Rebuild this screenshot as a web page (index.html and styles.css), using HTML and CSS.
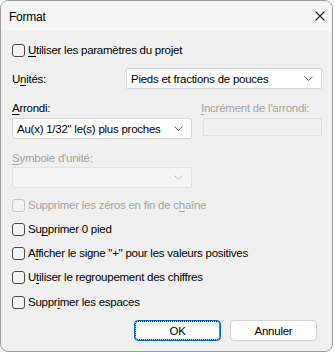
FILE: index.html
```html
<!DOCTYPE html>
<html lang="fr">
<head>
    <meta charset="UTF-8">
    <title>Format</title>
    <link rel="stylesheet" href="styles.css">
</head>
<body>

    <div class="window">
        <div class="titlebar">
            <span class="title">Format</span>
            <svg class="close" width="10" height="10" viewBox="0 0 10 10">
                <path d="M0.5 0.5 L9.5 9.5 M9.5 0.5 L0.5 9.5" stroke="#1a1a1a" stroke-width="1.1" fill="none"/>
            </svg>
        </div>

        <div class="content">
            <div class="check first">
                <span class="box"></span>
                <span><u>U</u>tiliser les paramètres du projet</span>
            </div>

            <div class="units-row">
                <span class="label">U<u>n</u>ités:</span>
                <div class="combo combo-units">
                    <span>Pieds et fractions de pouces</span>
                    <svg class="chevron" width="9" height="5" viewBox="0 0 9 5"><path d="M0.5 0.5 L4.5 4.5 L8.5 0.5" stroke="#5f5f5f" fill="none"/></svg>
                </div>
            </div>

            <div class="fields">
                <div class="field">
                    <span class="label"><u>A</u>rrondi:</span>
                    <div class="combo">
                        <span>Au(x) 1/32" le(s) plus proches</span>
                        <svg class="chevron" width="9" height="5" viewBox="0 0 9 5"><path d="M0.5 0.5 L4.5 4.5 L8.5 0.5" stroke="#5f5f5f" fill="none"/></svg>
                    </div>
                </div>
                <div class="field disabled">
                    <span class="label"><u>I</u>ncrément de l'arrondi:</span>
                    <div class="textbox"></div>
                </div>
                <div class="field disabled symbol">
                    <span class="label"><u>S</u>ymbole d'unité:</span>
                    <div class="combo">
                        <span></span>
                        <svg class="chevron" width="9" height="5" viewBox="0 0 9 5"><path d="M0.5 0.5 L4.5 4.5 L8.5 0.5" stroke="#c4c4c4" fill="none"/></svg>
                    </div>
                </div>
            </div>

            <div class="checks">
                <div class="check disabled">
                    <span class="box"></span>
                    <span>Supprimer les zéros en fin de c<u>h</u>aîne</span>
                </div>
                <div class="check">
                    <span class="box"></span>
                    <span>Su<u>p</u>primer 0 pied</span>
                </div>
                <div class="check">
                    <span class="box"></span>
                    <span>A<u>f</u>ficher le signe "+" pour les valeurs positives</span>
                </div>
                <div class="check">
                    <span class="box"></span>
                    <span>U<u>t</u>iliser le regroupement des chiffres</span>
                </div>
                <div class="check last">
                    <span class="box"></span>
                    <span>Suppr<u>i</u>mer les espaces</span>
                </div>
            </div>

            <div class="buttons">
                <button class="btn ok">OK</button>
                <button class="btn">Annuler</button>
            </div>
        </div>
    </div>

</body>
</html>
```

FILE: styles.css
```css
body {
    margin: 0;
    padding: 0;
    background-color: #ffffff;
    font-family: 'Liberation Sans', Arial, sans-serif;
    font-size: 11.5px;
    letter-spacing: -0.25px;
    color: #000000;
}

.window {
    width: 333px;
    height: 352px;
    box-sizing: border-box;
    border: 1px solid #9c9c9c;
    border-radius: 8px;
    background-color: #f0f0f0;
    overflow: hidden;
}

.titlebar {
    height: 30px;
    display: flex;
    align-items: center;
    justify-content: space-between;
    padding: 0 7px 0 8px;
    background-color: #f5f5f5;
}

.title {
    font-size: 12px;
    margin-top: 1px;
}

.content {
    padding: 11px 10px 0 11px;
}

u {
    text-decoration-thickness: 1px;
    text-underline-offset: 2px;
}

.check {
    display: flex;
    align-items: center;
    height: 16px;
    line-height: 16px;
    white-space: nowrap;
}

.box {
    width: 11px;
    height: 11px;
    border: 1px solid #4a4a4a;
    border-radius: 3px;
    background-color: #f4f4f4;
    margin-right: 3px;
    flex-shrink: 0;
}

.check.disabled {
    color: #a3a3a3;
}

.check.disabled .box {
    border-color: #c6c6c6;
    background-color: #f3f3f3;
}

.units-row {
    display: flex;
    align-items: center;
    margin-top: 10px;
}

.label {
    display: block;
    height: 16px;
    line-height: 16px;
    white-space: nowrap;
}

.combo {
    height: 21px;
    box-sizing: border-box;
    border: 1px solid #d6d6d6;
    border-radius: 2px;
    background-color: #ffffff;
    display: flex;
    align-items: center;
    justify-content: space-between;
    padding: 0 8px 0 4px;
    white-space: nowrap;
}

.combo-units {
    width: 196px;
    margin-left: auto;
}

.fields {
    display: grid;
    grid-template-columns: 180px 1fr;
    column-gap: 9px;
    margin-top: 11px;
}

.field .label {
    margin-bottom: 2px;
}

.field.disabled {
    color: #a3a3a3;
}

.field.disabled .combo {
    background-color: #f5f5f5;
    border-color: #e2e2e2;
}

.symbol {
    margin-top: 11px;
}

.symbol .label {
    margin-bottom: 1px;
}

.textbox {
    height: 18px;
    margin-top: 2px;
    margin-left: 2px;
    box-sizing: border-box;
    border: 1px solid #e0e0e0;
    background-color: #f0f0f0;
}

.checks {
    margin-top: 9px;
    display: flex;
    flex-direction: column;
    gap: 8px;
}

.checks .last {
    margin-top: 1px;
}

.buttons {
    display: flex;
    justify-content: flex-end;
    gap: 9px;
    margin-top: 10px;
    padding-right: 5px;
}

.btn {
    width: 87px;
    height: 21px;
    box-sizing: border-box;
    border: 1px solid #d0d0d0;
    border-radius: 4px;
    background-color: #fdfdfd;
    font-family: 'Liberation Sans', Arial, sans-serif;
    font-size: 11.5px;
    letter-spacing: -0.25px;
    color: #000000;
    padding: 0;
}

.btn.ok {
    border-color: #0067c0;
    outline: 1px dotted #000000;
    outline-offset: -2px;
}
```
